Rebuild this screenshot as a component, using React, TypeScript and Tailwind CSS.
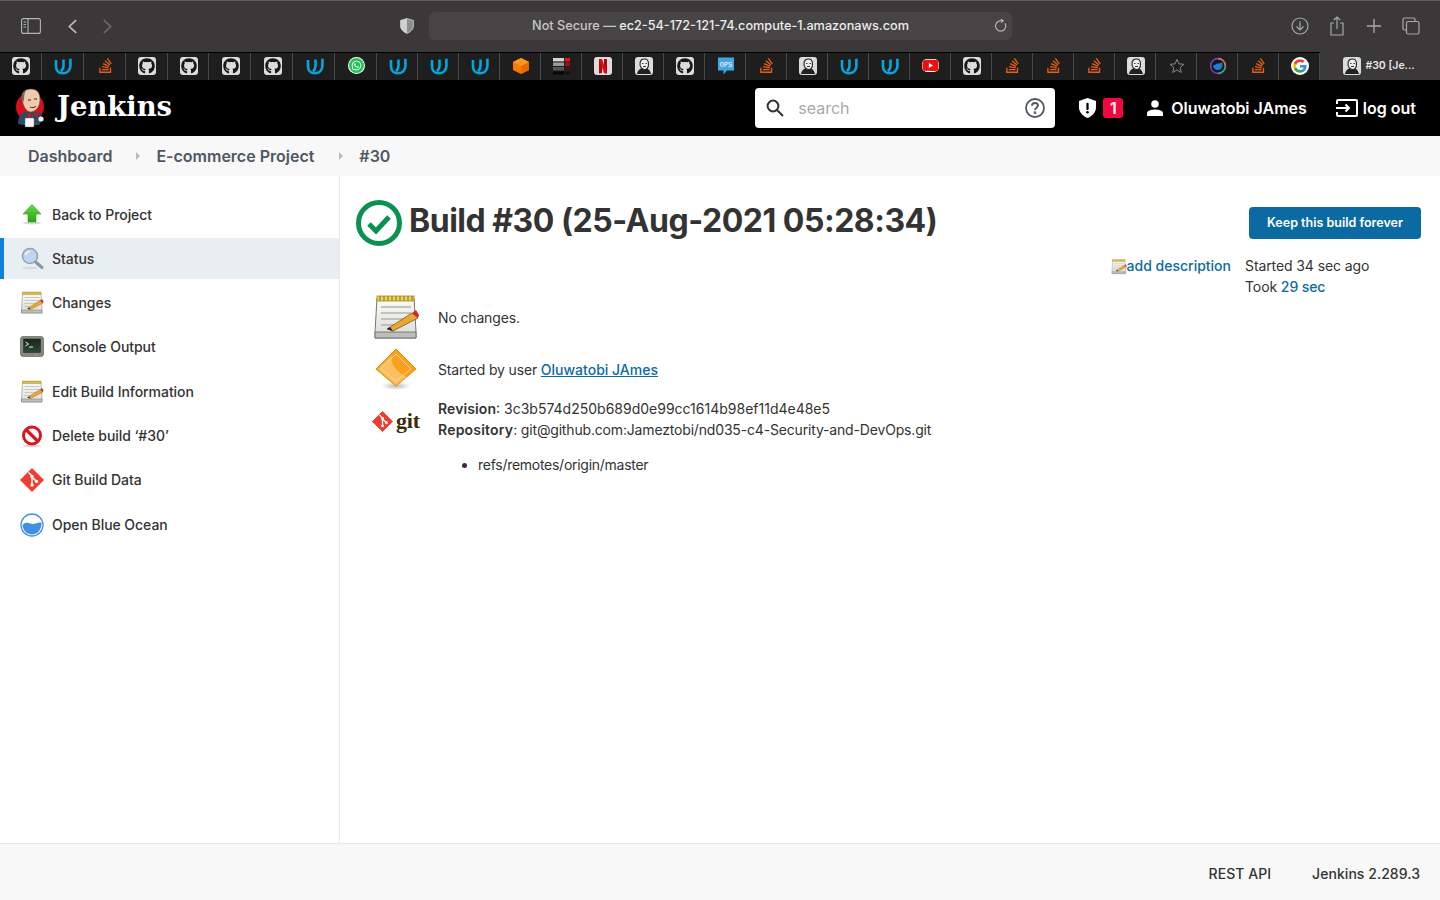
import { FaGithub, FaStackOverflow, FaWhatsapp, FaYoutube } from "react-icons/fa";

// favicons in the favourites bar, left to right
const favourites = [
  "gh", "u", "so", "gh", "gh", "gh", "gh", "u", "wa", "u", "u", "u", "cube", "stats", "nf", "jk",
  "gh", "ops", "so", "jk", "u", "u", "yt", "gh", "so", "so", "so", "jk", "star", "ring", "so", "g",
];

const tasks = [
  { label: "Back to Project", icon: "up" },
  { label: "Status", icon: "search", active: true },
  { label: "Changes", icon: "notepad" },
  { label: "Console Output", icon: "terminal" },
  { label: "Edit Build Information", icon: "notepad" },
  { label: "Delete build ‘#30’", icon: "delete" },
  { label: "Git Build Data", icon: "git" },
  { label: "Open Blue Ocean", icon: "ocean" },
];

function JenkinsFace({ className }: { className: string }) {
  return (
    <svg viewBox="0 0 30 40" className={className}>
      <circle cx="15" cy="19" r="14" fill="#d5121c" />
      <path d="M3 36 C3 27 8 23 14 24 L25 24 C27 27 27 33 24 37 L8 37 Z" fill="#2d4c63" />
      <path d="M7 11 C6 4 11 1 16 1 C22 1 25 5 25 11 C25 18 22 23 16 24 C11 24 8 18 7 11 Z" fill="#efcbab" stroke="#5d4a40" strokeWidth="0.6" />
      <path d="M7 11 C6 6 8 3 11 2 C9 6 9 10 9 14 Z" fill="#6d6a68" />
      <path d="M13 12 h3 M19 11 h3 M15 19 c2 1 4 1 6 -1" stroke="#3a2a22" strokeWidth="1" fill="none" />
      <path d="M13 25 L18 27 L23 24 L23 29 L18 27.5 L13 30 Z" fill="#d5121c" />
      <rect x="10" y="30" width="9" height="9" rx="1" fill="#f4f4f4" stroke="#777" strokeWidth="0.4" />
      <circle cx="26" cy="31" r="2.6" fill="#f1eee9" />
    </svg>
  );
}

function Notepad({ className }: { className: string }) {
  return (
    <svg viewBox="0 0 48 48" className={className}>
      <defs>
        <linearGradient id="padBase" x1="0" y1="0" x2="0" y2="1">
          <stop offset="0" stopColor="#fbfbf6" />
          <stop offset="1" stopColor="#dcdcd8" />
        </linearGradient>
      </defs>
      <path d="M5 4 H42 L44 38 V44 H3 V38 Z" fill="url(#padBase)" stroke="#77776f" strokeWidth="1" />
      <path d="M3 38 H44 V44 H3 Z" fill="#bdbdbd" stroke="#666" strokeWidth="0.8" />
      <rect x="5" y="2" width="37" height="5" fill="#ecd35a" stroke="#a38d22" strokeWidth="0.8" />
      <path d="M8 2 v5 M12 2 v5 M16 2 v5 M20 2 v5 M24 2 v5 M28 2 v5 M32 2 v5 M36 2 v5 M40 2 v5" stroke="#8a7514" strokeWidth="1" />
      <path d="M9 13 H39 M9 19 H39 M9 25 H32 M9 31 H24" stroke="#b4b4ae" strokeWidth="1.3" />
      <path d="M15 35 L40 19 L46 24 L21 37 Z" fill="#eaa833" stroke="#7d5a18" strokeWidth="0.8" />
      <path d="M40 19 L44 16 L47 21 L46 24 Z" fill="#d9242b" />
      <path d="M15 35 L18 33 L21 37 Z" fill="#222" />
    </svg>
  );
}

function TaskIcon({ name }: { name: string }) {
  if (name === "notepad") return <Notepad className="w-6 h-6" />;
  if (name === "up")
    return (
      <svg viewBox="0 0 24 24" className="w-6 h-6">
        <defs>
          <linearGradient id="upFill" x1="0" y1="0" x2="0" y2="1">
            <stop offset="0" stopColor="#6cd846" />
            <stop offset="1" stopColor="#1fa80e" />
          </linearGradient>
        </defs>
        <ellipse cx="12" cy="20" rx="9" ry="1.5" fill="#d7d7d7" />
        <path d="M12 1.5 L21 11 H16 V19 H8 V11 H3 Z" fill="url(#upFill)" stroke="#3b9c26" strokeWidth="0.6" />
      </svg>
    );
  if (name === "search")
    return (
      <svg viewBox="0 0 24 24" className="w-6 h-6">
        <ellipse cx="10" cy="21" rx="8" ry="1.4" fill="#d8dce0" />
        <path d="M15 14.5 L22 20.5" stroke="#8e959c" strokeWidth="3" strokeLinecap="round" />
        <circle cx="10" cy="9" r="7.5" fill="#bcd7f1" stroke="#9aa3ab" strokeWidth="1.6" />
        <path d="M5.5 8 C6 5.5 8 4.5 10 4.5" stroke="#f2f8fe" strokeWidth="1.6" fill="none" />
      </svg>
    );
  if (name === "terminal")
    return (
      <svg viewBox="0 0 24 24" className="w-6 h-6">
        <defs>
          <linearGradient id="screenFill" x1="0" y1="0" x2="0" y2="1">
            <stop offset="0" stopColor="#14261a" />
            <stop offset="1" stopColor="#2d4a35" />
          </linearGradient>
        </defs>
        <rect x="0.5" y="1.5" width="23" height="20" rx="2.5" fill="#858980" stroke="#55584f" strokeWidth="0.6" />
        <rect x="3.5" y="4" width="17" height="13.5" fill="url(#screenFill)" stroke="#2c2f2a" strokeWidth="0.6" />
        <path d="M5.5 7 L8.5 9 L5.5 11 M9 12 H13" stroke="#e8efe6" strokeWidth="1" fill="none" />
        <circle cx="16" cy="19.7" r="0.7" fill="#6ddc4a" />
      </svg>
    );
  if (name === "delete")
    return (
      <svg viewBox="0 0 24 24" className="w-6 h-6">
        <ellipse cx="12" cy="22" rx="9" ry="1.4" fill="#dcdcdc" />
        <circle cx="12" cy="11.5" r="8.5" fill="#fff" stroke="#d31a22" strokeWidth="3" />
        <path d="M6 5.5 L18 17.5" stroke="#d31a22" strokeWidth="3.2" />
      </svg>
    );
  if (name === "git") return <GitMark className="w-6 h-6" />;
  return (
    <svg viewBox="0 0 24 24" className="w-6 h-6">
      <circle cx="12" cy="12" r="11" fill="#fff" stroke="#4a90e2" strokeWidth="1.3" />
      <path d="M2.5 12 C6 7.5 10 11 13 11 C16 11 19 8.5 21.5 10 C21.5 17 17 21.5 12 21.5 C7 21.5 3 17.5 2.5 12 Z" fill="#3f8fe3" />
    </svg>
  );
}

function GitMark({ className }: { className: string }) {
  return (
    <svg viewBox="0 0 24 24" className={className}>
      <path d="M12 0.5 L23.5 12 L12 23.5 L0.5 12 Z" fill="#f03c2e" strokeLinejoin="round" stroke="#f03c2e" />
      <path d="M8.5 4.5 L12 8 V17 M12 9 L16.5 13.5" stroke="#fff" strokeWidth="1.5" fill="none" />
      <circle cx="12" cy="8.5" r="1.7" fill="#fff" />
      <circle cx="12" cy="17" r="1.7" fill="#fff" />
      <circle cx="16.5" cy="13.5" r="1.7" fill="#fff" />
    </svg>
  );
}

function Udacity() {
  return (
    <svg viewBox="0 0 18 18" className="w-[18px] h-[18px]" fill="none" stroke="#06a5dc" strokeWidth="2.6">
      <path d="M2 3 V9.5 C2 14 5 16.3 9 16.3 C13 16.3 16.4 13.5 16.4 9 V1.8" />
      <path d="M9.5 2.6 V9 C9.5 11.5 8.5 13 7 14.5" />
    </svg>
  );
}

function Favicon({ name }: { name: string }) {
  if (name === "gh")
    return (
      <div className="w-[18px] h-[18px] rounded-[3px] bg-[#dcdcdc] flex items-center justify-center">
        <FaGithub className="w-4 h-4 text-[#171717]" />
      </div>
    );
  if (name === "u") return <Udacity />;
  if (name === "so") return <FaStackOverflow className="w-[17px] h-[17px] text-[#e8600f]" />;
  if (name === "wa") return <FaWhatsapp className="w-[15px] h-[15px] text-white bg-[#25c05a] rounded-full p-[2px] ring-1 ring-white" />;
  if (name === "yt") return <FaYoutube className="w-[17px] h-[17px] text-[#ee0f0f] bg-white rounded-[5px] [clip-path:inset(2px_0_2px_0_round_5px)]" />;
  if (name === "jk")
    return (
      <div className="w-[18px] h-[18px] rounded-[3px] bg-[#dcdcdc] flex items-center justify-center overflow-hidden">
        <svg viewBox="0 0 18 18" className="w-[18px] h-[18px]">
          <path d="M2 17 C3 12 6 11 9 11 C13 11 15 13 16 17 Z" fill="#222" />
          <path d="M5 7 C5 3 7 2 9.5 2 C12.5 2 13.5 4 13.5 7 C13.5 10 12 12.5 9.5 12.5 C7 12.5 5 10 5 7 Z" fill="#eee" stroke="#222" strokeWidth="1.1" />
          <path d="M7 6.5 h1.5 M10.5 6.5 h1.5 M8 9.5 h3" stroke="#222" strokeWidth="0.9" />
        </svg>
      </div>
    );
  if (name === "cube")
    return (
      <svg viewBox="0 0 18 18" className="w-[18px] h-[18px]">
        <path d="M9 1 L17 5 V13 L9 17 L1 13 V5 Z" fill="#f57c00" />
        <path d="M9 1 L17 5 L9 9 L1 5 Z" fill="#ff9a1f" />
        <path d="M9 9 L17 5 V13 L9 17 Z" fill="#e66a00" />
      </svg>
    );
  if (name === "stats")
    return (
      <svg viewBox="0 0 18 18" className="w-[18px] h-[18px]">
        <rect x="0" y="1" width="11" height="3.4" fill="#d4d4d4" />
        <rect x="12" y="1" width="5" height="3.4" fill="#e8131b" />
        <rect x="0" y="5.5" width="11" height="3.4" fill="#9c9c9c" />
        <rect x="12" y="5.5" width="5" height="3.4" fill="#a50f15" />
        <rect x="0" y="10" width="11" height="3.4" fill="#555" />
        <rect x="12" y="10" width="5" height="3.4" fill="#4d0f12" />
        <rect x="0" y="14.5" width="11" height="3" fill="#070707" />
        <rect x="12" y="14.5" width="5" height="3" fill="#111" />
      </svg>
    );
  if (name === "nf")
    return (
      <div className="w-[18px] h-[18px] rounded-[3px] bg-[#dcdcdc] flex items-center justify-center">
        <svg viewBox="0 0 18 18" className="w-[18px] h-[18px]">
          <path d="M5 2 H8 V16 L5 16.5 Z M10 2 H13 V16.5 L10 16 Z" fill="#b20710" />
          <path d="M5 2 H8 L13 16.5 L10 16 Z" fill="#e50914" />
        </svg>
      </div>
    );
  if (name === "ops")
    return (
      <svg viewBox="0 0 18 18" className="w-[18px] h-[18px]">
        <path d="M1 0.5 H17 V13.5 H10 L6.5 17.5 V13.5 H1 Z" fill="#45a5e0" />
        <text x="9" y="9.5" textAnchor="middle" fontSize="7" fontFamily="Liberation Mono, monospace" fill="#fff">OPS</text>
      </svg>
    );
  if (name === "star")
    return (
      <svg viewBox="0 0 18 18" className="w-[16px] h-[16px]" fill="none" stroke="#8a8a8a" strokeWidth="1.1">
        <path d="M9 1.5 L11.2 6.6 L16.8 7.1 L12.6 10.8 L13.8 16.3 L9 13.4 L4.2 16.3 L5.4 10.8 L1.2 7.1 L6.8 6.6 Z" />
      </svg>
    );
  if (name === "ring")
    return (
      <svg viewBox="0 0 18 18" className="w-[18px] h-[18px]">
        <circle cx="9" cy="9" r="7.4" fill="#101820" stroke="#7a3fb0" strokeWidth="1.6" />
        <path d="M9 1.6 A7.4 7.4 0 0 1 16.4 9" fill="none" stroke="#e2722b" strokeWidth="1.6" />
        <path d="M16.4 9 A7.4 7.4 0 0 1 9 16.4" fill="none" stroke="#27b39a" strokeWidth="1.6" />
        <path d="M4 8 C6 9 7 6.5 9 6.5 C11 6.5 11.5 5 13.5 6 C14 10 12 13 9 13 C6 13 4 11 4 8 Z" fill="#1b7fd1" />
      </svg>
    );
  // google
  return (
    <svg viewBox="0 0 18 18" className="w-[18px] h-[18px]">
      <circle cx="9" cy="9" r="9" fill="#fff" />
      <path d="M15.6 9.2 c0 -.5 0 -.9 -.1 -1.3 H9 v2.5 h3.7 c-.2 .9 -.7 1.6 -1.4 2 v1.7 h2.2 c1.3 -1.2 2.1 -2.9 2.1 -4.9 Z" fill="#4285f4" />
      <path d="M9 15.8 c1.8 0 3.4 -.6 4.5 -1.7 l-2.2 -1.7 c-.6 .4 -1.4 .7 -2.3 .7 -1.8 0 -3.3 -1.2 -3.8 -2.8 H2.9 v1.7 C4 14.3 6.3 15.8 9 15.8 Z" fill="#34a853" />
      <path d="M5.2 10.3 c-.3 -.8 -.3 -1.8 0 -2.6 V6 H2.9 c-.9 1.9 -.9 4.1 0 6 Z" fill="#fbbc05" />
      <path d="M9 4.9 c1 0 1.9 .3 2.6 1 l1.9 -1.9 C12.4 2.9 10.8 2.2 9 2.2 6.3 2.2 4 3.7 2.9 6 l2.3 1.7 C5.7 6.1 7.2 4.9 9 4.9 Z" fill="#ea4335" />
    </svg>
  );
}

export default function App() {
  return (
    <div className="h-screen flex flex-col overflow-hidden bg-white text-[#333] font-['Inter',sans-serif]">
      {/* SAFARI TOOLBAR */}
      <div className="h-[52px] shrink-0 bg-[#3a3839] border-t border-[#5f5d5e] flex items-center pb-[1px] relative">
        <svg viewBox="0 0 20 16" className="w-5 h-4 ml-[21px] text-[#b4b4b4]" fill="none" stroke="currentColor" strokeWidth="1.1">
          <rect x="0.6" y="0.6" width="18.8" height="14.8" rx="2" />
          <path d="M7 0.6 V15.4" />
          <path d="M2.5 4 H5 M2.5 6.5 H5 M2.5 9 H5" />
        </svg>
        <svg viewBox="0 0 12 18" className="w-[11px] h-[17px] ml-[26px] text-[#c2c2c2]" fill="none" stroke="currentColor" strokeWidth="1.7">
          <path d="M10 2 L2.5 9 L10 16" />
        </svg>
        <svg viewBox="0 0 12 18" className="w-[11px] h-[17px] ml-[24px] text-[#6c6a6b]" fill="none" stroke="currentColor" strokeWidth="1.7">
          <path d="M2 2 L9.5 9 L2 16" />
        </svg>
        <svg viewBox="0 0 14 16" className="w-[14px] h-4 ml-[287px] shrink-0">
          <path d="M7 0.6 L13.4 2.4 V8 C13.4 11.5 10.5 14 7 15.4 C3.5 14 0.6 11.5 0.6 8 V2.4 Z" fill="#8e8d8d" stroke="#d0d0d0" strokeWidth="0.8" />
          <path d="M7 0.6 L0.6 2.4 V8 C0.6 11.5 3.5 14 7 15.4 Z" fill="#d0d0d0" />
        </svg>
        <div className="w-[583px] h-7 ml-[15px] rounded-[6px] bg-[#464445] flex items-center justify-center relative text-[12.7px] font-medium">
          <span className="text-[#c6c6c6]">Not Secure —&nbsp;</span>
          <span className="text-[#ebebeb]">ec2-54-172-121-74.compute-1.amazonaws.com</span>
          <svg viewBox="0 0 14 14" className="w-[13px] h-[13px] absolute right-[5px] top-[7px] text-[#c4c4c4]" fill="none" stroke="currentColor" strokeWidth="1.1">
            <path d="M11.8 4.5 A5.5 5.5 0 1 1 7 2 H9" />
            <path d="M7.5 0 L10 2 L7.5 4" />
          </svg>
        </div>
        <div className="ml-auto mr-[11px] flex items-center text-[#a8a8a8]">
          <div className="w-[37px] flex justify-center">
            <svg viewBox="0 0 18 18" className="w-[18px] h-[18px]" fill="none" stroke="currentColor" strokeWidth="1.2">
              <circle cx="9" cy="9" r="8" />
              <path d="M9 4.5 V13 M5.5 9.5 L9 13 L12.5 9.5" />
            </svg>
          </div>
          <div className="w-[37px] flex justify-center">
            <svg viewBox="0 0 16 20" className="w-4 h-5" fill="none" stroke="currentColor" strokeWidth="1.2">
              <path d="M5 7 H2 V19 H14 V7 H11 M8 13 V1 M4.8 4 L8 1 L11.2 4" />
            </svg>
          </div>
          <div className="w-[37px] flex justify-center">
            <svg viewBox="0 0 14 14" className="w-[14px] h-[14px]" fill="none" stroke="currentColor" strokeWidth="1.4">
              <path d="M7 0 V14 M0 7 H14" />
            </svg>
          </div>
          <div className="w-[37px] flex justify-center">
            <svg viewBox="0 0 18 18" className="w-[18px] h-[18px]" fill="none" stroke="currentColor" strokeWidth="1.2">
              <path d="M4 13 H2.5 A1.5 1.5 0 0 1 1 11.5 V2.5 A1.5 1.5 0 0 1 2.5 1 H11.5 A1.5 1.5 0 0 1 13 2.5 V4" />
              <rect x="4.5" y="4.5" width="12.5" height="12.5" rx="1.8" />
            </svg>
          </div>
        </div>
      </div>

      {/* FAVOURITES BAR */}
      <div className="h-[28px] shrink-0 flex bg-[#3a3839]">
        <div className="flex border-t border-black bg-[#1f1e1f]">
          {favourites.map((name, i) => (
            <div
              key={i}
              className={
                i < 9
                  ? "w-[41.9px] h-full pl-[2px] pb-[2px] flex items-center justify-center border-r border-[#4a4949]"
                  : "w-[41px] h-full pl-px pb-[2px] flex items-center justify-center border-r border-[#4a4949]"
              }
            >
              <Favicon name={name} />
            </div>
          ))}
        </div>
        <div className="flex-1 flex items-center justify-center gap-1 pr-[2px] text-[10.5px] font-semibold text-[#e6e6e6]">
          <Favicon name="jk" />
          <span>#30 [Je...</span>
        </div>
      </div>

      {/* JENKINS HEADER */}
      <header className="h-14 shrink-0 bg-black flex items-center text-white">
        <JenkinsFace className="w-[30px] h-10 ml-[15px]" />
        <span className="ml-[12px] mb-[2px] text-[27.4px] leading-none font-bold font-['DejaVu_Serif',serif]">Jenkins</span>
        <div className="ml-auto w-[300px] h-10 bg-white rounded-[4px] flex items-center pl-[11px] pr-[10px]">
          <svg viewBox="0 0 18 18" className="w-[18px] h-[18px] text-[#333]" fill="none" stroke="currentColor" strokeWidth="2">
            <circle cx="7" cy="7" r="5.4" />
            <path d="M11 11 L17 17" />
          </svg>
          <span className="ml-[14px] text-base text-[#a9a9a9]">search</span>
          <svg viewBox="0 0 20 20" className="w-5 h-5 ml-auto text-[#4f5763]" fill="none" stroke="currentColor" strokeWidth="1.8">
            <circle cx="10" cy="10" r="9" />
            <path d="M7 7.7 C7 5.8 8.4 5 10 5 C11.7 5 13 6 13 7.6 C13 9.6 10 9.8 10 12" />
            <circle cx="10" cy="14.7" r="0.5" fill="currentColor" />
          </svg>
        </div>
        <svg viewBox="0 0 20 22" className="w-[19px] h-[22px] ml-[23px]">
          <path d="M10 0.5 L19 3.5 V10 C19 15.5 15 19.5 10 21.5 C5 19.5 1 15.5 1 10 V3.5 Z" fill="#fff" />
          <rect x="8.8" y="5.5" width="2.4" height="7.5" rx="1" fill="#000" />
          <circle cx="10" cy="15.5" r="1.4" fill="#000" />
        </svg>
        <span className="ml-[6px] w-5 h-5 rounded-[3px] bg-[#f0083f] flex items-center justify-center text-base font-semibold">1</span>
        <svg viewBox="0 0 16 16" className="w-4 h-4 ml-6" fill="#fff">
          <circle cx="8" cy="4" r="3.8" />
          <path d="M0 16 V13.5 C0 10.5 4 9.5 8 9.5 C12 9.5 16 10.5 16 13.5 V16 Z" />
        </svg>
        <span className="ml-2 text-base font-semibold">Oluwatobi JAmes</span>
        <svg viewBox="0 0 22 18" className="w-[22px] h-[18px] ml-[29px]" fill="none" stroke="#fff" strokeWidth="2">
          <path d="M1 5 V2 Q1 1 2 1 H20 Q21 1 21 2 V16 Q21 17 20 17 H2 Q1 17 1 16 V13" />
          <path d="M0 9 H13 M9.5 5.5 L13 9 L9.5 12.5" />
        </svg>
        <span className="ml-[5px] mr-6 text-base font-semibold">log out</span>
      </header>

      {/* BREADCRUMB */}
      <nav className="h-10 shrink-0 bg-[#f8f8f8] flex items-center pl-7 text-base font-semibold text-[#4f5763]">
        <span>Dashboard</span>
        <span className="ml-6 mr-4 w-0 h-0 border-y-[4px] border-y-transparent border-l-[4px] border-l-[#b8bcc2]" />
        <span>E-commerce Project</span>
        <span className="ml-[25px] mr-4 w-0 h-0 border-y-[4px] border-y-transparent border-l-[4px] border-l-[#b8bcc2]" />
        <span>#30</span>
      </nav>

      <div className="flex-1 flex min-h-0">
        {/* SIDE PANEL */}
        <aside className="w-[340px] shrink-0 border-r border-[#eaeaea] pt-[18px] text-sm tracking-[-0.05px]">
          {tasks.map((task) => (
            <div
              key={task.label}
              className={
                task.active
                  ? "h-[41px] mb-[3.3px] flex items-center gap-2 pl-4 border-l-4 border-[#0b82d8] bg-[#e9eef3] font-medium"
                  : "h-[41px] mb-[3.3px] flex items-center gap-2 pl-4 border-l-4 border-transparent font-medium"
              }
            >
              <TaskIcon name={task.icon} />
              <span>{task.label}</span>
            </div>
          ))}
        </aside>

        {/* BUILD PAGE */}
        <main className="flex-1 pl-4 pr-[19px] pt-6 text-sm">
          <div className="flex items-center justify-between">
            <div className="flex items-center gap-[7px]">
              <svg viewBox="0 0 46 46" className="w-[46px] h-[46px]" fill="none" stroke="#0a9150">
                <circle cx="23" cy="23" r="20.5" strokeWidth="5" />
                <path d="M13 24 L20 31 L33 17" strokeWidth="5" />
              </svg>
              <h1 className="mb-1 text-[32px] leading-none font-bold tracking-[-0.48px]">Build #30 (25-Aug-2021 05:28:34)</h1>
            </div>
            <button className="w-[172px] h-8 rounded-[4px] bg-[#0b6aa2] text-white text-[12.5px] font-semibold">
              Keep this build forever
            </button>
          </div>

          <div className="flex items-start justify-between">
            <div className="pt-[47px] pl-4 tracking-[-0.15px]">
              <div className="flex items-center h-[50px]">
                <Notepad className="w-12 h-12" />
                <span className="ml-[18px]">No changes.</span>
              </div>
              <div className="flex items-center h-[50px] mt-[2px]">
                <svg viewBox="0 0 44 44" className="w-11 h-11 ml-[2px]">
                  <defs>
                    <radialGradient id="gearShadow">
                      <stop offset="0" stopColor="#bbb" />
                      <stop offset="1" stopColor="#fff" />
                    </radialGradient>
                  </defs>
                  <ellipse cx="22" cy="38" rx="15" ry="4" fill="url(#gearShadow)" />
                  <path d="M22 1 L42 21 L22 38 L2 21 Z" fill="#f7a11f" stroke="#e58f10" strokeLinejoin="round" />
                  <path d="M18 7 C16 14 20 22 32 29 L22 37 L4 21 Z" fill="#fbc05f" />
                  <path d="M22 6 L37 21 L22 33 L7 21 Z" fill="none" stroke="#fdd89a" strokeWidth="1" />
                </svg>
                <span className="ml-5">
                  Started by user <a className="text-[#0b6aa2] underline font-medium tracking-normal">Oluwatobi JAmes</a>
                </span>
              </div>
              <div className="flex mt-[3px]">
                <div className="w-[50px] flex items-start pt-[13px] gap-[3px]">
                  <GitMark className="w-[21px] h-[21px] shrink-0" />
                  <span className="text-[22px] leading-[20px] font-bold text-[#3b2d05] font-['Liberation_Serif',serif]">git</span>
                </div>
                <div className="ml-4">
                  <div className="leading-[21px] tracking-normal"><b className="font-semibold tracking-[0.1px]">Revision</b>: 3c3b574d250b689d0e99cc1614b98ef11d4e48e5</div>
                  <div className="leading-[21px] tracking-[-0.17px]"><b className="font-semibold tracking-[0.2px]">Repository</b>: git@github.com:Jameztobi/nd035-c4-Security-and-DevOps.git</div>
                  <ul className="mt-[14px] pl-10 list-disc leading-[21px] tracking-[-0.27px]">
                    <li>refs/remotes/origin/master</li>
                  </ul>
                </div>
              </div>
            </div>
            <div className="flex items-start pt-[9px] mr-[5px] tracking-[-0.1px]">
              <Notepad className="w-4 h-4 mt-[4px] -ml-px" />
              <a className="mt-px text-[#0b6aa2] font-medium tracking-normal">add description</a>
              <div className="ml-[14px] w-[171px] leading-[21px]">
                <div>Started 34 sec ago</div>
                <div>Took <a className="text-[#0b6aa2] font-medium">29 sec</a></div>
              </div>
            </div>
          </div>
        </main>
      </div>

      {/* FOOTER */}
      <footer className="h-[57px] shrink-0 bg-[#f8f8f8] border-t border-[#e9e9e9] flex items-center justify-end gap-[41px] pr-5 text-sm font-medium pt-1 tracking-[0.05px]">
        <span>REST API</span>
        <span>Jenkins 2.289.3</span>
      </footer>
    </div>
  );
}
